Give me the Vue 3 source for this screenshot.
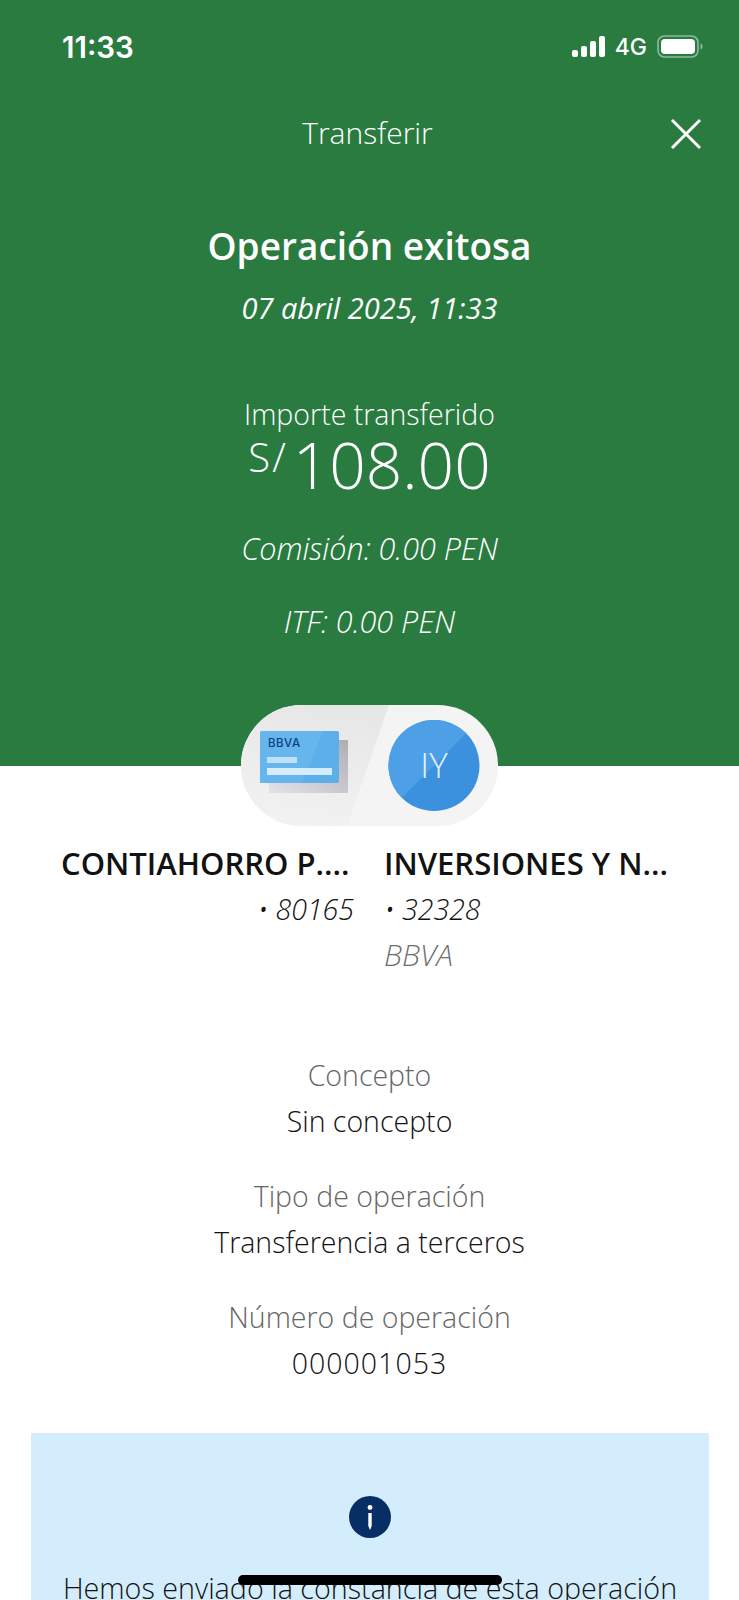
<script setup>
const details = [
  { label: 'Concepto', value: 'Sin concepto' },
  { label: 'Tipo de operación', value: 'Transferencia a terceros' },
  { label: 'Número de operación', value: '000001053' }
]
</script>

<template>
  <div class="screen">
    <header class="hero">
      <div class="status">
        <span class="time">11:33</span>
        <div class="status-right">
          <svg width="33" height="22" viewBox="0 0 33 22">
            <rect x="0" y="14" width="6" height="7" rx="2" fill="#fff" />
            <rect x="9" y="10" width="6" height="11" rx="2" fill="#fff" />
            <rect x="18" y="5" width="6" height="16" rx="2" fill="#fff" />
            <rect x="27" y="0" width="6" height="21" rx="2" fill="#fff" />
          </svg>
          <span class="net">4G</span>
          <svg width="46" height="24" viewBox="0 0 46 24">
            <rect x="1" y="1" width="40" height="21" rx="6.5" fill="none" stroke="#8fbb9d" stroke-width="1.6" />
            <rect x="4" y="4" width="34" height="15" rx="4" fill="#fff" />
            <path d="M43.5 8.5c1.6.5 2 1.6 2 3s-.4 2.500-2 3z" fill="#8fbb9d" />
          </svg>
        </div>
      </div>

      <div class="nav">
        <span class="nav-title">Transferir</span>
        <svg class="close" width="32" height="32" viewBox="0 0 32 32">
          <path d="M2 2 30 30M30 2 2 30" stroke="#fff" stroke-width="3" fill="none" />
        </svg>
      </div>

      <h1 class="title">Operación exitosa</h1>
      <p class="date">07 abril 2025, 11:33</p>

      <p class="amount-label">Importe transferido</p>
      <div class="amount"><span class="currency">S/</span><span class="sum">108.00</span></div>

      <p class="fee">Comisión: 0.00 PEN</p>
      <p class="fee fee-itf">ITF: 0.00 PEN</p>
    </header>

    <div class="pill">
      <svg width="258" height="121" viewBox="0 0 258 121">
        <defs>
          <linearGradient id="shadowCard" x1="0" y1="1" x2="1" y2="0">
            <stop offset="0" stop-color="#e2e2e7" />
            <stop offset="1" stop-color="#aeaeb5" />
          </linearGradient>
          <linearGradient id="pillLeft" x1="0.5" y1="0" x2="0.3" y2="1">
            <stop offset="0" stop-color="#e7e7e7" />
            <stop offset="1" stop-color="#f2f2f2" />
          </linearGradient>
        </defs>
        <rect x="1" y="0" width="257" height="121" rx="60.500" fill="#f4f4f4" />
        <path d="M61.500 0H149L107 121H61.500A60.500 60.500 0 0 1 61.500 0Z" fill="url(#pillLeft)" />
        <rect x="29" y="35" width="79" height="53" fill="url(#shadowCard)" />
        <rect x="20" y="26" width="79" height="52" rx="2" fill="#5cafe9" />
        <path d="M20 78V28a2 2 0 0 1 2-2H83L62 78Z" fill="#66b5ec" />
        <text x="28" y="42" class="card-logo">BBVA</text>
        <rect x="27" y="52" width="30" height="6" fill="#bfe1f8" />
        <rect x="27" y="63" width="65" height="7" fill="#d4ecfc" />
        <circle cx="194" cy="60.500" r="45.500" fill="#3c91df" />
        <path d="M161.800 92.700A45.500 45.500 0 0 1 226.200 28.300Z" fill="#4da0e6" />
      </svg>
      <span class="initials">IY</span>
    </div>

    <section class="accounts">
      <div class="account account-from">
        <p class="acc-name">CONTIAHORRO P....</p>
        <p class="acc-num">• 80165</p>
      </div>
      <div class="account account-to">
        <p class="acc-name">INVERSIONES Y N...</p>
        <p class="acc-num">• 32328</p>
        <p class="acc-bank">BBVA</p>
      </div>
    </section>

    <section class="details">
      <div v-for="d in details" :key="d.label" class="detail">
        <p class="detail-label">{{ d.label }}</p>
        <p class="detail-value">{{ d.value }}</p>
      </div>
    </section>

    <section class="notice">
      <svg width="42" height="42" viewBox="0 0 42 42">
        <circle cx="21" cy="21" r="21" fill="#072f66" />
        <circle cx="21" cy="11.500" r="2.400" fill="#fff" />
        <path d="M19.300 17h3.400v13l-1.700 4-1.700-4z" fill="#fff" />
      </svg>
      <p class="notice-text">Hemos enviado la constancia de esta operación</p>
    </section>

    <div class="home-bar"></div>
  </div>
</template>

<style scoped>
.screen {
  position: relative;
  width: 739px;
  height: 1600px;
  overflow: hidden;
  background: #fff;
  font-family: "Open Sans", "Liberation Sans", sans-serif;
  color: #121212;
}

p,
h1 {
  margin: 0;
}

.hero {
  height: 766px;
  box-sizing: border-box;
  background: #297b40;
  color: #fff;
  text-align: center;
}

.status {
  display: flex;
  justify-content: space-between;
  align-items: center;
  height: 30px;
  padding: 32px 36px 0 62px;
}

.time {
  font-family: Inter, sans-serif;
  font-size: 29.500px;
  font-weight: 600;
}

.status-right {
  display: flex;
  align-items: center;
  gap: 10px;
}

.net {
  font-family: Inter, sans-serif;
  font-size: 23px;
  font-weight: 500;
}

.nav {
  position: relative;
  margin-top: 49px;
  height: 44px;
  line-height: 44px;
  padding-right: 4px;
}

.nav-title {
  font-size: 30px;
  font-weight: 300;
}

.close {
  position: absolute;
  right: 37px;
  top: 7px;
}

.title {
  margin-top: 66px;
  font-size: 37px;
  line-height: 50px;
  font-weight: 600;
}

.date {
  margin-top: 18px;
  font-size: 29px;
  line-height: 38px;
  font-style: italic;
  font-weight: 500;
}

.amount-label {
  margin-top: 68px;
  font-size: 28.500px;
  line-height: 38px;
  font-weight: 300;
}

.amount {
  display: flex;
  justify-content: center;
  align-items: flex-start;
  height: 70px;
  margin-top: -3px;
}

.currency {
  margin-top: 5px;
  margin-right: 5px;
  font-size: 40px;
  line-height: 44px;
  letter-spacing: 2px;
  font-weight: 300;
}

.sum {
  font-size: 64px;
  line-height: 70px;
  font-weight: 300;
}

.fee {
  margin-top: 29px;
  font-size: 30.500px;
  line-height: 38px;
  font-style: italic;
  font-weight: 300;
}

.fee-itf {
  margin-top: 35px;
}

.pill {
  position: relative;
  width: 258px;
  height: 121px;
  margin: -61px auto 0 240px;
}

.pill svg {
  display: block;
}

.card-logo {
  font-family: Inter, sans-serif;
  font-size: 11.500px;
  font-weight: 500;
  letter-spacing: 0.5px;
  fill: #0b3f7d;
}

.initials {
  position: absolute;
  left: 148px;
  top: 30px;
  width: 92px;
  text-align: center;
  font-size: 35px;
  line-height: 60px;
  font-weight: 300;
  color: #e4f1fb;
}

.accounts {
  display: grid;
  grid-template-columns: 293px 293px;
  column-gap: 30px;
  margin: 16px 0 0 61px;
}

.acc-name {
  font-size: 31px;
  line-height: 42px;
  font-weight: 600;
  white-space: nowrap;
}

.acc-num {
  margin-top: 4px;
  font-size: 28.500px;
  line-height: 42px;
  font-style: italic;
  font-weight: 300;
}

.account-from .acc-num {
  text-align: right;
}

.acc-bank {
  margin-top: 4px;
  font-size: 30px;
  line-height: 42px;
  font-style: italic;
  font-weight: 300;
  color: #6f6f6f;
}

.details {
  margin-top: 77px;
  text-align: center;
}

.detail {
  margin-bottom: 30px;
}

.detail-label {
  font-size: 28.500px;
  line-height: 45px;
  font-weight: 300;
  color: #666;
}

.detail-value {
  font-size: 28.500px;
  line-height: 46px;
  font-weight: 300;
}

.detail:last-child .detail-value {
  letter-spacing: 1px;
}

.notice {
  display: flex;
  flex-direction: column;
  align-items: center;
  gap: 31px;
  margin: 47px 30px 0 31px;
  padding-top: 63px;
  height: 200px;
  background: #d4edfc;
}

.notice-text {
  font-size: 28.700px;
  line-height: 38px;
  font-weight: 300;
  white-space: nowrap;
}

.home-bar {
  position: absolute;
  left: 238px;
  top: 1575px;
  width: 264px;
  height: 10px;
  border-radius: 5px;
  background: #000;
}
</style>
